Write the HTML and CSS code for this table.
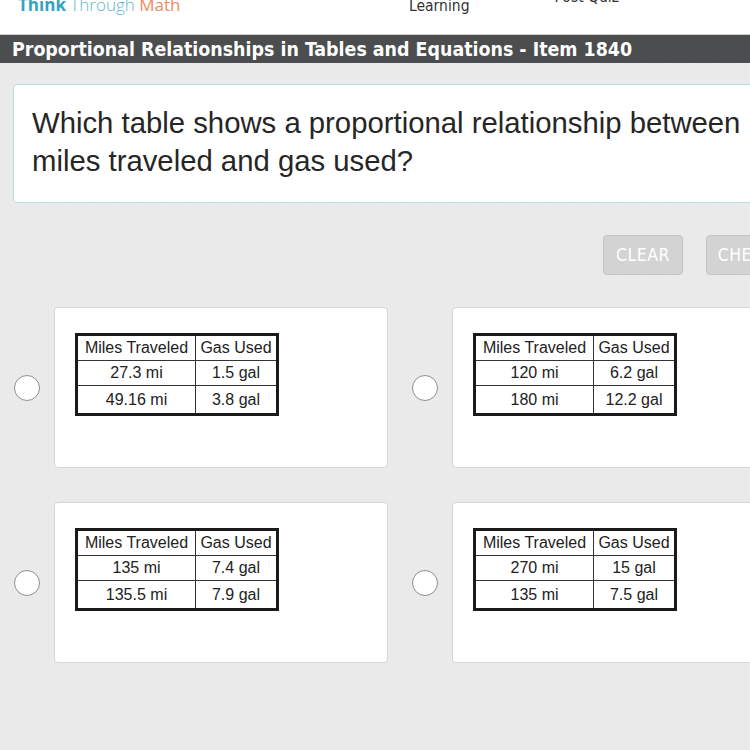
FILE: index.html
```html
<!DOCTYPE html>
<html>
<head>
<meta charset="utf-8">
<link rel="stylesheet" href="styles.css">
</head>
<body>
<header class="topbar">
  <div class="logo"><span class="think">Think</span> <span class="through">Through</span> <span class="math">Math</span></div>
  <div class="nav">
    <span class="nav-item learning">Learning</span>
    <span class="nav-item postquiz">Post Quiz</span>
  </div>
</header>
<div class="titlebar">Proportional Relationships in Tables and Equations - Item 1840</div>
<main class="content">
  <section class="question">
    <p>Which table shows a proportional relationship between miles traveled and gas used?</p>
  </section>
  <div class="actions">
    <button class="btn">CLEAR</button>
    <button class="btn">CHECK</button>
  </div>
  <div class="options">
    <div class="option">
      <span class="radio"></span>
      <div class="card">
        <table class="data">
          <tr><th>Miles Traveled</th><th>Gas Used</th></tr>
          <tr><td>27.3 mi</td><td>1.5 gal</td></tr>
          <tr class="last"><td>49.16 mi</td><td>3.8 gal</td></tr>
        </table>
      </div>
    </div>
    <div class="option">
      <span class="radio"></span>
      <div class="card">
        <table class="data">
          <tr><th>Miles Traveled</th><th>Gas Used</th></tr>
          <tr><td>120 mi</td><td>6.2 gal</td></tr>
          <tr class="last"><td>180 mi</td><td>12.2 gal</td></tr>
        </table>
      </div>
    </div>
    <div class="option">
      <span class="radio"></span>
      <div class="card">
        <table class="data">
          <tr><th>Miles Traveled</th><th>Gas Used</th></tr>
          <tr><td>135 mi</td><td>7.4 gal</td></tr>
          <tr class="last"><td>135.5 mi</td><td>7.9 gal</td></tr>
        </table>
      </div>
    </div>
    <div class="option">
      <span class="radio"></span>
      <div class="card">
        <table class="data">
          <tr><th>Miles Traveled</th><th>Gas Used</th></tr>
          <tr><td>270 mi</td><td>15 gal</td></tr>
          <tr class="last"><td>135 mi</td><td>7.5 gal</td></tr>
        </table>
      </div>
    </div>
  </div>
</main>
</body>
</html>
```
FILE: styles.css
```css
html, body {
  margin: 0;
  padding: 0;
}
body {
  width: 750px;
  height: 750px;
  overflow: hidden;
  background-color: #ebebeb;
  background-image: repeating-linear-gradient(90deg, rgba(0,0,0,0.012) 0 1px, rgba(255,255,255,0.02) 1px 3px);
  font-family: "Liberation Sans", Arial, sans-serif;
}
.topbar {
  height: 34px;
  background: #fff;
  border-bottom: 1px solid #cfcfcf;
  display: flex;
  align-items: flex-start;
  overflow: hidden;
}
.logo {
  margin: -6px 0 0 18px;
  font-family: "Open Sans", sans-serif;
  font-size: 17px;
  line-height: 22px;
  width: 300px;
}
.think { color: #33a3bf; font-weight: 700; }
.through { color: #5cb8cc; font-weight: 300; }
.math { color: #ef8a63; font-weight: 400; }
.nav {
  display: flex;
  margin-left: 91px;
}
.nav-item {
  font-family: "DejaVu Sans Condensed", "DejaVu Sans", sans-serif;
  font-size: 15.5px;
  color: #333;
  line-height: 18px;
}
.learning { margin-top: -3px; }
.postquiz { margin-top: -12px; margin-left: 85px; }
.titlebar {
  height: 28px;
  background: #4b4d4e;
  color: #fff;
  padding-left: 12px;
  font-family: "DejaVu Sans Condensed", "DejaVu Sans", sans-serif;
  font-weight: 700;
  font-size: 19.4px;
  line-height: 29px;
  white-space: nowrap;
}
.content {
  padding: 21px 0 0 13px;
}
.question {
  background: #fff;
  border: 1px solid #b8dfe3;
  border-radius: 4px;
  height: 119px;
  margin-right: -40px;
  box-sizing: border-box;
  padding: 19px 0 0 18px;
}
.question p {
  margin: 0;
  font-size: 29.3px;
  line-height: 38px;
  color: #262626;
  width: 740px;
}
.actions {
  display: flex;
  gap: 23px;
  padding: 32px 0 0 590px;
  white-space: nowrap;
}
.btn {
  flex: none;
  width: 80px;
  height: 40px;
  background: #d3d3d3;
  border: 1px solid #c4c4c4;
  border-radius: 4px;
  color: #fff;
  font-family: "DejaVu Sans Condensed", "DejaVu Sans", sans-serif;
  font-size: 17.5px;
  letter-spacing: 0.5px;
  padding: 0;
  text-align: center;
}
.options {
  display: grid;
  grid-template-columns: 385px 385px;
  column-gap: 13px;
  row-gap: 34px;
  margin-top: 32px;
  margin-left: 1px;
}
.option {
  display: flex;
  align-items: center;
  gap: 14px;
}
.radio {
  flex: none;
  width: 24px;
  height: 24px;
  border: 1px solid #8f8f8f;
  border-radius: 50%;
  background: #fff;
}
.card {
  flex: none;
  width: 334px;
  height: 161px;
  box-sizing: border-box;
  background: #fff;
  border: 1px solid #d6d6d6;
  border-radius: 4px;
  padding: 25px 0 0 20px;
}
.data {
  border-collapse: collapse;
  border: 3px solid #1a1a1a;
  font-family: "Liberation Sans", Arial, sans-serif;
  font-size: 16px;
  color: #222;
  table-layout: fixed;
  width: 204px;
}
.data th, .data td {
  border: 1px solid #333;
  font-weight: 400;
  text-align: center;
  height: 24px;
  padding: 0;
  white-space: nowrap;
}
.data .last td { height: 27px; }
.data th:first-child { width: 117px; }
```
